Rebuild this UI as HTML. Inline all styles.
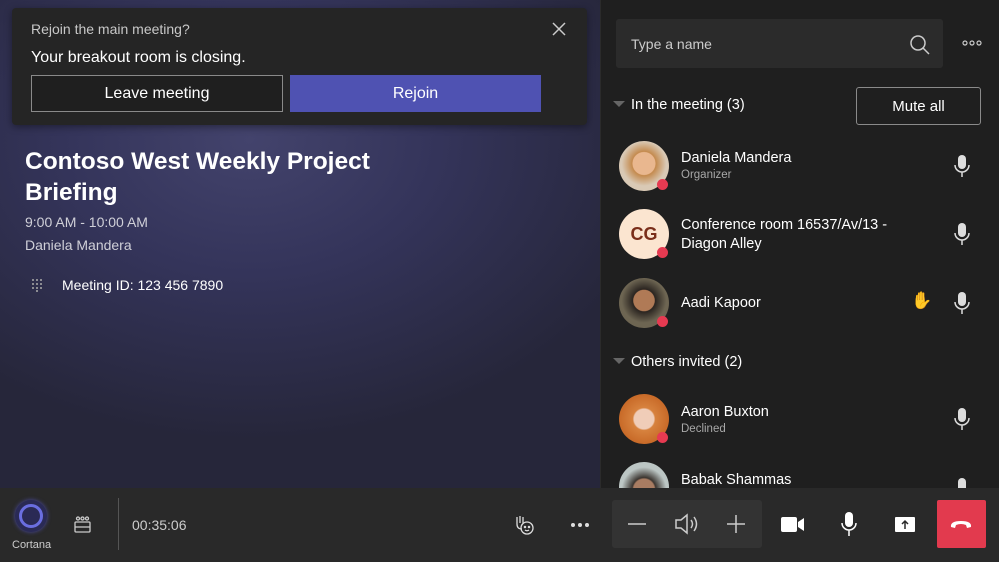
<!DOCTYPE html>
<html><head><style>
*{margin:0;padding:0;box-sizing:border-box}
body{width:999px;height:562px;overflow:hidden;font-family:"Liberation Sans",sans-serif;background:#1f1f1f;position:relative;color:#fff}
.left{position:absolute;left:0;top:0;width:600px;height:488px;background:radial-gradient(ellipse 420px 300px at 250px 140px,#43436c 0%,#34345a 45%,#26263a 100%)}
.right{position:absolute;left:600px;top:0;width:399px;height:488px;background:#1f1f1f;border-left:1px solid #2b2b2b;overflow:hidden}
.a{position:absolute}
.toast{left:12px;top:8px;width:575px;height:117px;background:#252525;border-radius:4px;box-shadow:0 2px 8px rgba(0,0,0,.4)}
.btn{position:absolute;height:37px;display:flex;align-items:center;justify-content:center;font-size:16px}
.av{position:absolute;left:18px;width:50px;height:50px;border-radius:50%}
.dot{position:absolute;width:11px;height:11px;border-radius:50%;background:#e63a51;border:0}
.nm{position:absolute;left:80px;font-size:14.5px;color:#fff}
.sub{position:absolute;left:80px;font-size:11.5px;color:#a8a8a8}
.mic{position:absolute;left:352px}
.bar{position:absolute;left:0;top:488px;width:999px;height:74px;background:#292929}
</style></head><body>
<div class="left">
 <div class="a toast">
  <div class="a" style="left:19px;top:13px;font-size:14px;color:#c8c8c8">Rejoin the main meeting?</div>
  <svg class="a" style="left:540px;top:14px" width="14" height="14"><path d="M1 1L13 13M13 1L1 13" stroke="#ccc" stroke-width="1.5"/></svg>
  <div class="a" style="left:19px;top:41px;font-size:16px;color:#fff">Your breakout room is closing.</div>
  <div class="btn" style="left:19px;top:67px;width:252px;border:1px solid #8a8a8a;background:#1f1f1f">Leave meeting</div>
  <div class="btn" style="left:278px;top:67px;width:251px;background:#4f52b2">Rejoin</div>
 </div>
 <div class="a" style="left:25px;top:146px;font-size:24.5px;font-weight:bold;line-height:31px;width:400px">Contoso West Weekly Project Briefing</div>
 <div class="a" style="left:25px;top:214px;font-size:14px;color:#d0d0d8">9:00 AM - 10:00 AM</div>
 <div class="a" style="left:25px;top:237px;font-size:14px;color:#d0d0d8">Daniela Mandera</div>
 <svg class="a" style="left:31px;top:278px" width="12" height="14"><g fill="#aaa"><circle cx="2" cy="2" r="1"/><circle cx="6" cy="2" r="1"/><circle cx="10" cy="2" r="1"/><circle cx="2" cy="6" r="1"/><circle cx="6" cy="6" r="1"/><circle cx="10" cy="6" r="1"/><circle cx="2" cy="10" r="1"/><circle cx="6" cy="10" r="1"/><circle cx="10" cy="10" r="1"/><circle cx="6" cy="13" r="1"/></g></svg>
 <div class="a" style="left:62px;top:277px;font-size:14px;color:#fff">Meeting ID: 123 456 7890</div>
</div>
<div class="right">
 <div class="a" style="left:15px;top:19px;width:327px;height:49px;background:#2b2b2b;border-radius:3px"></div>
 <div class="a" style="left:30px;top:36px;font-size:14px;color:#ccc">Type a name</div>
 <svg class="a" style="left:308px;top:34px" width="22" height="22"><circle cx="9" cy="9" r="7" stroke="#ccc" stroke-width="1.5" fill="none"/><path d="M14 14L20 20" stroke="#ccc" stroke-width="1.5"/></svg>
 <svg class="a" style="left:361px;top:39px" width="20" height="8"><g stroke="#ccc" fill="none" stroke-width="1.2"><circle cx="3" cy="4" r="2"/><circle cx="10" cy="4" r="2"/><circle cx="17" cy="4" r="2"/></g></svg>
 <svg class="a" style="left:12px;top:101px" width="12" height="8"><path d="M0 0H12L6 6Z" fill="#666"/></svg>
 <div class="a" style="left:30px;top:97px;font-size:14.5px">In the meeting (3)</div>
 <div class="a" style="left:255px;top:87px;width:125px;height:38px;border:1px solid #8a8a8a;border-radius:3px;display:flex;align-items:center;justify-content:center;font-size:15px">Mute all</div>

 <div class="av" style="top:141px;background:radial-gradient(circle at 50% 45%,#e9b78f 0 30%,#c48a4e 32%,#d9c9b5 60%)"></div><div class="dot" style="left:56px;top:179px"></div>
 <div class="nm" style="top:150px">Daniela Mandera</div><div class="sub" style="top:169px">Organizer</div>
 <div class="av" style="top:209px;background:#fbe5d0;color:#7a2e1a;font-weight:bold;font-size:18px;display:flex;align-items:center;justify-content:center">CG</div><div class="dot" style="left:56px;top:247px"></div>
 <div class="nm" style="top:216px;line-height:19px">Conference room 16537/Av/13 -<br>Diagon Alley</div>
 <div class="av" style="top:278px;background:radial-gradient(circle at 50% 45%,#b07a56 0 28%,#2a2420 30%,#6d6552 60%)"></div><div class="dot" style="left:56px;top:316px"></div>
 <div class="nm" style="top:295px">Aadi Kapoor</div>
 <div class="a" style="left:310px;top:291px;font-size:17px;color:#f0b429">✋</div>
 <svg class="a" style="left:12px;top:358px" width="12" height="8"><path d="M0 0H12L6 6Z" fill="#666"/></svg>
 <div class="a" style="left:30px;top:354px;font-size:14.5px">Others invited (2)</div>
 <div class="av" style="top:394px;background:radial-gradient(circle at 50% 50%,#f0cdb8 0 28%,#d7823e 32%,#c86a28 70%)"></div><div class="dot" style="left:56px;top:432px"></div>
 <div class="nm" style="top:404px">Aaron Buxton</div><div class="sub" style="top:423px">Declined</div>
 <div class="av" style="top:462px;background:radial-gradient(circle at 50% 55%,#a87c62 0 28%,#3b3530 32%,#bcc6c4 60%)"></div>
 <div class="nm" style="top:472px">Babak Shammas</div>
 <svg class="mic" style="top:155px" width="18" height="22"><rect x="5" y="0" width="8" height="14" rx="4" fill="#ddd"/><path d="M2 10a7 7 0 0 0 14 0M9 17v5" stroke="#ddd" stroke-width="1.5" fill="none"/></svg>
 <svg class="mic" style="top:223px" width="18" height="22"><rect x="5" y="0" width="8" height="14" rx="4" fill="#ddd"/><path d="M2 10a7 7 0 0 0 14 0M9 17v5" stroke="#ddd" stroke-width="1.5" fill="none"/></svg>
 <svg class="mic" style="top:292px" width="18" height="22"><rect x="5" y="0" width="8" height="14" rx="4" fill="#ddd"/><path d="M2 10a7 7 0 0 0 14 0M9 17v5" stroke="#ddd" stroke-width="1.5" fill="none"/></svg>
 <svg class="mic" style="top:408px" width="18" height="22"><rect x="5" y="0" width="8" height="14" rx="4" fill="#ddd"/><path d="M2 10a7 7 0 0 0 14 0M9 17v5" stroke="#ddd" stroke-width="1.5" fill="none"/></svg>
 <svg class="mic" style="top:478px" width="18" height="22"><rect x="5" y="0" width="8" height="14" rx="4" fill="#ddd"/></svg>
</div>
<div class="bar">
 <div class="a" style="left:15px;top:12px;width:32px;height:32px;border-radius:50%;background:#2a2a55;box-shadow:0 0 4px #4b4ba0"></div>
 <div class="a" style="left:19px;top:16px;width:24px;height:24px;border-radius:50%;border:3px solid #6a6ee0"></div>
 <div class="a" style="left:12px;top:51px;font-size:11px;color:#ccc">Cortana</div>
 <svg class="a" style="left:74px;top:28px" width="17" height="17"><g fill="none" stroke="#ccc" stroke-width="1.3"><circle cx="4" cy="2.5" r="1.5"/><circle cx="8.5" cy="2.5" r="1.5"/><circle cx="13" cy="2.5" r="1.5"/><rect x="1" y="6" width="15" height="10" rx="1"/><path d="M1 11h15"/></g></svg>
 <div class="a" style="left:118px;top:10px;width:1px;height:52px;background:#555"></div>
 <div class="a" style="left:132px;top:29px;font-size:14px;color:#ccc">00:35:06</div>
 <svg class="a" style="left:514px;top:26px" width="22" height="22"><g fill="none" stroke="#ddd" stroke-width="1.3"><path d="M3 10V3M6 9V2M9 9V3M3 10q0 5 5 5"/><circle cx="13" cy="14" r="6"/><circle cx="11" cy="13" r=".6"/><circle cx="15" cy="13" r=".6"/><path d="M11 16q2 1.5 4 0"/></g></svg>
 <svg class="a" style="left:570px;top:34px" width="20" height="6"><g fill="#ddd"><circle cx="3" cy="3" r="2"/><circle cx="10" cy="3" r="2"/><circle cx="17" cy="3" r="2"/></g></svg>
 <div class="a" style="left:612px;top:12px;width:150px;height:48px;background:#333;border-radius:3px"></div>
 <svg class="a" style="left:627px;top:30px" width="20" height="12"><path d="M1 6H19" stroke="#ccc" stroke-width="1.5"/></svg>
 <svg class="a" style="left:674px;top:24px" width="26" height="24"><g fill="none" stroke="#ccc" stroke-width="1.5"><path d="M2 8h5l6-5v18l-6-5H2z"/><path d="M17 8q3 4 0 8M20 5q5 7 0 14"/></g></svg>
 <svg class="a" style="left:726px;top:26px" width="20" height="20"><path d="M10 1V19M1 10H19" stroke="#ccc" stroke-width="1.5"/></svg>
 <svg class="a" style="left:781px;top:28px" width="24" height="17"><rect x="0" y="1" width="16" height="15" rx="2" fill="#fff"/><path d="M17 6L23 2V15L17 11Z" fill="#fff"/></svg>
 <svg class="a" style="left:840px;top:24px" width="18" height="25"><rect x="5" y="0" width="8" height="15" rx="4" fill="#fff"/><path d="M2 11a7 7 0 0 0 14 0M9 18v6" stroke="#fff" stroke-width="1.5" fill="none"/></svg>
 <svg class="a" style="left:895px;top:29px" width="20" height="15"><rect x="0" y="0" width="20" height="15" rx="1" fill="#fff"/><path d="M10 12V4M7 7l3-3 3 3" stroke="#292929" stroke-width="1.5" fill="none"/></svg>
 <div class="a" style="left:937px;top:12px;width:49px;height:48px;background:#e23a4e;border-radius:2px"></div>
 <svg class="a" style="left:949px;top:30px" width="24" height="12"><path d="M2 9Q1 3 12 3T22 9L18 10L17 7Q12 5 7 7L6 10Z" fill="#fff"/></svg>
</div>
</body></html>
